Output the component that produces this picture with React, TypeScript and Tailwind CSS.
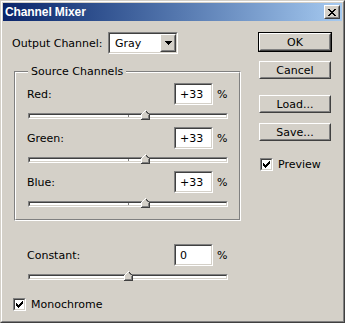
import React from "react";

const font = "font-['DejaVu_Sans',sans-serif]";

function Raised({ className = "", children }: { className?: string; children?: React.ReactNode }) {
  return (
    <div className={"border border-t-white border-l-white border-r-[#404040] border-b-[#404040] bg-[#d4d0c8] " + className}>
      <div className="w-full h-full border border-t-[#d4d0c8] border-l-[#d4d0c8] border-r-[#808080] border-b-[#808080] flex items-center justify-center">
        {children}
      </div>
    </div>
  );
}

function Sunken({ className = "", inner = "", children }: { className?: string; inner?: string; children?: React.ReactNode }) {
  return (
    <div className={"border border-t-[#808080] border-l-[#808080] border-r-white border-b-white " + className}>
      <div className={"w-full h-full border border-t-[#404040] border-l-[#404040] border-r-[#d4d0c8] border-b-[#d4d0c8] " + inner}>
        {children}
      </div>
    </div>
  );
}

function Check() {
  const cols = [2, 3, 4, 3, 2, 1, 0];
  return (
    <svg width="7" height="7" viewBox="0 0 7 7" shapeRendering="crispEdges">
      {cols.map((y, x) => (
        <rect key={x} x={x} y={y} width="1" height="3" fill="#000" />
      ))}
    </svg>
  );
}

function CheckBox() {
  return (
    <Sunken className="w-[13px] h-[13px]" inner="bg-white flex items-center justify-center">
      <Check />
    </Sunken>
  );
}

function Thumb({ left }: { left: number }) {
  return (
    <svg className="absolute top-0" style={{ left }} width="9" height="10" viewBox="0 0 9 10" shapeRendering="crispEdges">
      <polygon points="0,4 4,0 8,4 8,9 0,9" fill="#d4d0c8" />
      <rect x="0" y="4" width="1" height="5" fill="#fff" />
      <rect x="1" y="3" width="1" height="1" fill="#fff" />
      <rect x="2" y="2" width="1" height="1" fill="#fff" />
      <rect x="3" y="1" width="1" height="1" fill="#fff" />
      <rect x="4" y="0" width="1" height="1" fill="#fff" />
      <rect x="5" y="1" width="1" height="1" fill="#404040" />
      <rect x="6" y="2" width="1" height="1" fill="#404040" />
      <rect x="7" y="3" width="1" height="1" fill="#404040" />
      <rect x="8" y="4" width="1" height="6" fill="#404040" />
      <rect x="0" y="9" width="9" height="1" fill="#404040" />
      <rect x="7" y="5" width="1" height="4" fill="#808080" />
      <rect x="1" y="8" width="7" height="1" fill="#808080" />
      <rect x="5" y="2" width="1" height="1" fill="#808080" />
      <rect x="6" y="3" width="1" height="1" fill="#808080" />
    </svg>
  );
}

function Slider({ value }: { value: number }) {
  const left = Math.round(100 + value / 2 - 4);
  return (
    <div className="relative mt-[5px] h-[10px] w-[200px] ml-px">
      <Sunken className="mt-[3px] h-[6px] w-[200px]" inner="bg-white" />
      <div className="absolute left-[100px] top-[5px] w-px h-[2px] bg-[#808080]" />
      <Thumb left={left} />
    </div>
  );
}

function ValueRow({ label, value, num, labelWidth = 147 }: { label: string; value: string; num: number; labelWidth?: number }) {
  return (
    <div className="flex flex-col">
      <div className="flex items-center h-[22px]">
        <div className="w-[147px]">{label}</div>
        <Sunken className="w-[39px] h-[22px]" inner="bg-white pl-[4px] flex items-center">
          {value}
        </Sunken>
        <div className="ml-[4px]">%</div>
      </div>
      <Slider value={num} />
    </div>
  );
}

function Btn({ label, def = false, className = "" }: { label: string; def?: boolean; className?: string }) {
  if (def) {
    return (
      <div className={"w-[74px] h-[20px] border border-black " + className}>
        <Raised className="w-full h-full">{label}</Raised>
      </div>
    );
  }
  return <Raised className={"ml-px w-[72px] h-[18px] " + className}>{label}</Raised>;
}

export default function App() {
  return (
    <div className={"w-[345px] h-[323px] bg-[#d4d0c8] border border-t-[#d4d0c8] border-l-[#d4d0c8] border-r-[#404040] border-b-[#404040] text-[11px] leading-[13px] text-black " + font}>
      <div className="h-full border border-t-white border-l-white border-r-[#808080] border-b-[#808080] p-px flex flex-col">
        <div className="h-[18px] flex items-center justify-between pl-[2px] pr-[2px] bg-gradient-to-r from-[#0a246a] to-[#a6caf0]">
          <span className="font-['Liberation_Sans',sans-serif] font-bold text-[12px] text-white tracking-[-0.1px]">Channel Mixer</span>
          <Raised className="w-[16px] h-[14px]">
            <svg width="8" height="7" viewBox="0 0 8 7" shapeRendering="crispEdges">
              {[0, 1, 2, 3, 4, 5, 6].map((i) => (
                <g key={i}>
                  <rect x={i} y={i} width="2" height="1" fill="#000" />
                  <rect x={6 - i} y={i} width="2" height="1" fill="#000" />
                </g>
              ))}
            </svg>
          </Raised>
        </div>
        <div className="flex-1 flex">
          <div className="w-[255px] pl-[9px] pt-[11px] flex flex-col">
            <div className="flex items-center h-[22px]">
              <div className="w-[96px]">Output Channel:</div>
              <Sunken className="w-[70px] h-[22px]" inner="bg-white flex items-center justify-between pl-[5px]">
                <span>Gray</span>
                <Raised className="w-[16px] h-[18px]">
                  <svg width="7" height="4" viewBox="0 0 7 4" shapeRendering="crispEdges">
                    <polygon points="0,0 7,0 3.5,4" fill="#000" />
                  </svg>
                </Raised>
              </Sunken>
            </div>
            <div className="relative mt-[17px] ml-[2px] w-[227px] h-[150px] border border-t-[#808080] border-l-[#808080] border-r-white border-b-white">
              <div className="w-full h-full border border-t-white border-l-white border-r-[#808080] border-b-[#808080] pl-[11px] pt-[10px] flex flex-col gap-[7px]">
                <ValueRow label="Red:" value="+33" num={33} />
                <ValueRow label="Green:" value="+33" num={33} />
                <ValueRow label="Blue:" value="+33" num={33} />
              </div>
              <div className="absolute left-[13px] top-[-7px] px-[3px] bg-[#d4d0c8]">Source Channels</div>
            </div>
            <div className="mt-[23px] ml-[15px]">
              <ValueRow label="Constant:" value="0" num={0} />
            </div>
            <div className="mt-[17px] ml-px flex items-center gap-[5px]">
              <CheckBox />
              <span>Monochrome</span>
            </div>
          </div>
          <div className="pt-[11px] flex flex-col">
            <Btn label="OK" def />
            <Btn label="Cancel" className="mt-[9px]" />
            <Btn label="Load..." className="mt-[16px]" />
            <Btn label="Save..." className="mt-[10px]" />
            <div className="mt-[17px] ml-[2px] flex items-center gap-[5px]">
              <CheckBox />
              <span>Preview</span>
            </div>
          </div>
        </div>
      </div>
    </div>
  );
}
